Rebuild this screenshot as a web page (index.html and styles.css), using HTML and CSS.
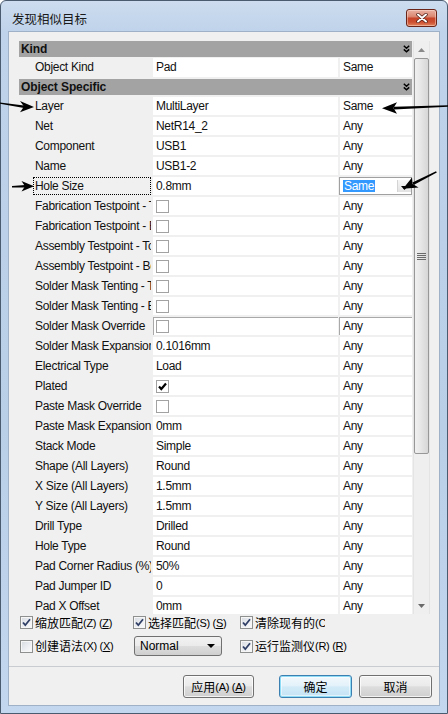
FILE: index.html
```html
<!DOCTYPE html>
<html>
<head>
<meta charset="utf-8">
<link rel="stylesheet" href="styles.css">
</head>
<body>
<div class="window">
  <div class="titlebar">
    <span class="title">发现相似目标</span>
    <div class="close">
      <svg width="12" height="10" viewBox="0 0 12 10"><path d="M2 1.5 L10 8.5 M10 1.5 L2 8.5" stroke="#4a1a12" stroke-width="3.4" stroke-linecap="round"/><path d="M2 1.5 L10 8.5 M10 1.5 L2 8.5" stroke="#fff" stroke-width="2" stroke-linecap="round"/></svg>
    </div>
  </div>
  <div class="client">
    <div class="main">
      <div class="grid">
        <div class="rows">
          <div class="hdr"><span>Kind</span><svg class="chev" width="7" height="8" viewBox="0 0 7 8"><path d="M0.8 0.8 L3.5 3.2 L6.2 0.8 M0.8 4.4 L3.5 6.8 L6.2 4.4" fill="none" stroke="#000" stroke-width="1.5"/></svg></div>
          <div class="row kindrow"><div class="lbl"><span class="t">Object Kind</span></div><div class="val">Pad</div><div class="cmp">Same</div></div>
          <div class="hdr hdr2"><span>Object Specific</span><svg class="chev" width="7" height="8" viewBox="0 0 7 8"><path d="M0.8 0.8 L3.5 3.2 L6.2 0.8 M0.8 4.4 L3.5 6.8 L6.2 4.4" fill="none" stroke="#000" stroke-width="1.5"/></svg></div>
          <div class="row"><div class="lbl"><span class="t">Layer</span></div><div class="val">MultiLayer</div><div class="cmp">Same</div></div>
          <div class="row"><div class="lbl"><span class="t">Net</span></div><div class="val">NetR14_2</div><div class="cmp">Any</div></div>
          <div class="row"><div class="lbl"><span class="t">Component</span></div><div class="val">USB1</div><div class="cmp">Any</div></div>
          <div class="row"><div class="lbl"><span class="t">Name</span></div><div class="val">USB1-2</div><div class="cmp">Any</div></div>
          <div class="row"><div class="lbl"><span class="t focus">Hole Size</span></div><div class="val">0.8mm</div><div class="cmp combo"><span class="sel">Same</span><span class="ddbtn"><svg width="7" height="4" viewBox="0 0 7 4"><path d="M0 0 H7 L3.5 4 Z" fill="#000"/></svg></span></div></div>
          <div class="row"><div class="lbl"><span class="t">Fabrication Testpoint - Top</span></div><div class="val"><span class="gcb"></span></div><div class="cmp">Any</div></div>
          <div class="row"><div class="lbl"><span class="t">Fabrication Testpoint - Bottom</span></div><div class="val"><span class="gcb"></span></div><div class="cmp">Any</div></div>
          <div class="row"><div class="lbl"><span class="t">Assembly Testpoint - Top</span></div><div class="val"><span class="gcb"></span></div><div class="cmp">Any</div></div>
          <div class="row"><div class="lbl"><span class="t">Assembly Testpoint - Bottom</span></div><div class="val"><span class="gcb"></span></div><div class="cmp">Any</div></div>
          <div class="row"><div class="lbl"><span class="t">Solder Mask Tenting - Top</span></div><div class="val"><span class="gcb"></span></div><div class="cmp">Any</div></div>
          <div class="row"><div class="lbl"><span class="t">Solder Mask Tenting - Bottom</span></div><div class="val"><span class="gcb"></span></div><div class="cmp">Any</div></div>
          <div class="row edit"><div class="lbl"><span class="t">Solder Mask Override</span></div><div class="val"><span class="gcb"></span></div><div class="cmp">Any</div></div>
          <div class="row"><div class="lbl"><span class="t">Solder Mask Expansion</span></div><div class="val">0.1016mm</div><div class="cmp">Any</div></div>
          <div class="row"><div class="lbl"><span class="t">Electrical Type</span></div><div class="val">Load</div><div class="cmp">Any</div></div>
          <div class="row"><div class="lbl"><span class="t">Plated</span></div><div class="val"><span class="gcb"><svg width="11" height="11" viewBox="0 0 11 11"><path d="M2 5.5 L4.3 8 L9 2.5" fill="none" stroke="#000" stroke-width="2.2"/></svg></span></div><div class="cmp">Any</div></div>
          <div class="row"><div class="lbl"><span class="t">Paste Mask Override</span></div><div class="val"><span class="gcb"></span></div><div class="cmp">Any</div></div>
          <div class="row"><div class="lbl"><span class="t">Paste Mask Expansion</span></div><div class="val">0mm</div><div class="cmp">Any</div></div>
          <div class="row"><div class="lbl"><span class="t">Stack Mode</span></div><div class="val">Simple</div><div class="cmp">Any</div></div>
          <div class="row"><div class="lbl"><span class="t">Shape (All Layers)</span></div><div class="val">Round</div><div class="cmp">Any</div></div>
          <div class="row"><div class="lbl"><span class="t">X Size (All Layers)</span></div><div class="val">1.5mm</div><div class="cmp">Any</div></div>
          <div class="row"><div class="lbl"><span class="t">Y Size (All Layers)</span></div><div class="val">1.5mm</div><div class="cmp">Any</div></div>
          <div class="row"><div class="lbl"><span class="t">Drill Type</span></div><div class="val">Drilled</div><div class="cmp">Any</div></div>
          <div class="row"><div class="lbl"><span class="t">Hole Type</span></div><div class="val">Round</div><div class="cmp">Any</div></div>
          <div class="row"><div class="lbl"><span class="t">Pad Corner Radius (%)</span></div><div class="val">50%</div><div class="cmp">Any</div></div>
          <div class="row"><div class="lbl"><span class="t">Pad Jumper ID</span></div><div class="val">0</div><div class="cmp">Any</div></div>
          <div class="row"><div class="lbl"><span class="t">Pad X Offset</span></div><div class="val">0mm</div><div class="cmp">Any</div></div>
        </div>
        <div class="scroll">
          <div class="sbtn"><svg width="7" height="4" viewBox="0 0 7 4"><path d="M0 4 H7 L3.5 0 Z" fill="#8a8a8a"/></svg></div>
          <div class="thumb"><svg width="9" height="9" viewBox="0 0 9 9"><path d="M0 1.5 H9 M0 3.5 H9 M0 5.5 H9 M0 7.5 H9" stroke="#6a6a6a" stroke-width="1"/></svg></div>
          <div class="track"></div>
          <div class="sbtn"><svg width="7" height="4" viewBox="0 0 7 4"><path d="M0 0 H7 L3.5 4 Z" fill="#6a6a6a"/></svg></div>
        </div>
      </div>
      <div class="opts">
        <div class="opt"><span class="cb on"><svg width="11" height="11" viewBox="0 0 11 11"><path d="M2 5.5 L4.3 8.2 L9 2.3" fill="none" stroke="#2f3f66" stroke-width="1.8"/></svg></span><span class="cn">缩放匹配</span><span class="la">(Z) (<u>Z</u>)</span></div>
        <div class="opt"><span class="cb on"><svg width="11" height="11" viewBox="0 0 11 11"><path d="M2 5.5 L4.3 8.2 L9 2.3" fill="none" stroke="#2f3f66" stroke-width="1.8"/></svg></span><span class="cn">选择匹配</span><span class="la">(S) (<u>S</u>)</span></div>
        <div class="opt"><span class="cb on"><svg width="11" height="11" viewBox="0 0 11 11"><path d="M2 5.5 L4.3 8.2 L9 2.3" fill="none" stroke="#2f3f66" stroke-width="1.8"/></svg></span><span class="clip"><span class="cn">清除现有的</span><span class="la">(C) (<u>C</u>)</span></span></div>
        <div class="opt row2"><span class="cb"></span><span class="cn">创建语法</span><span class="la">(X) (<u>X</u>)</span></div>
        <div class="opt row2"><div class="select"><span>Normal</span><svg width="8" height="4" viewBox="0 0 8 4"><path d="M0 0 H8 L4 4 Z" fill="#000"/></svg></div></div>
        <div class="opt row2"><span class="cb on"><svg width="11" height="11" viewBox="0 0 11 11"><path d="M2 5.5 L4.3 8.2 L9 2.3" fill="none" stroke="#2f3f66" stroke-width="1.8"/></svg></span><span class="cn">运行监测仪</span><span class="la">(R) (<u>R</u>)</span></div>
      </div>
    </div>
    <div class="buttons">
      <div class="btn apply"><span class="cn">应用</span><span class="la">(A) (<u>A</u>)</span></div>
      <div class="btn default"><span class="cn">确定</span></div>
      <div class="btn"><span class="cn">取消</span></div>
    </div>
  </div>
  <svg class="annot" width="448" height="714" viewBox="0 0 448 714">
    <g fill="#000">
      <polygon points="0,102.4 24,105.4 24,108 0,103.8"/>
      <polygon points="34,107 20,101 24,106.6 20,112.2"/>
      <polygon points="448,105.2 394,106.8 394,109.4 448,106.8"/>
      <polygon points="382,108.2 397,102.2 393.5,108 397,113.8"/>
      <polygon points="12,186 25,185 25,187.6 12,187.4"/>
      <polygon points="34,186.2 21.5,181 25,186.3 21.5,191.4"/>
      <polygon points="436,171.2 412.4,182.6 413.6,185 436.8,172.6"/>
      <polygon points="403,188.8 412,177.4 412.6,184 418.6,187.4"/>
    </g>
  </svg>
</div>
</body>
</html>
```
FILE: styles.css
```css
html, body {
  margin: 0;
  padding: 0;
}
body {
  width: 448px;
  height: 714px;
  overflow: hidden;
  font-family: "Liberation Sans", "Noto Sans CJK SC", sans-serif;
  font-size: 12px;
  color: #000;
  background: #fff;
}
.window {
  position: relative;
  width: 448px;
  height: 714px;
  box-sizing: border-box;
  border: 1px solid #4a5b70;
  border-radius: 6px 6px 0 0;
  background: linear-gradient(180deg, #cddcef 0, #bfd3ea 30px, #b9cfe8 60%, #c3d7ee 100%);
  display: flex;
  flex-direction: column;
}
.titlebar {
  height: 30px;
  display: flex;
  justify-content: space-between;
  align-items: flex-start;
  padding: 0 10px 0 11px;
  flex-shrink: 0;
}
.title {
  font-family: "Noto Sans CJK SC", sans-serif;
  font-size: 12.5px;
  line-height: 14px;
  margin-top: 11px;
  color: #1a1a1a;
}
.close {
  margin-top: 8px;
  width: 31px;
  height: 18px;
  box-sizing: border-box;
  border: 1px solid #6a2518;
  border-radius: 3px;
  background: linear-gradient(180deg, #eab0a2 0, #dc8a74 40%, #c7452a 52%, #cc4e30 75%, #e2845c 100%);
  box-shadow: inset 0 0 0 1px rgba(255, 230, 220, 0.45);
  display: flex;
  align-items: center;
  justify-content: center;
}
.client {
  margin: 0 7px;
  height: 675px;
  flex-shrink: 0;
  box-sizing: border-box;
  border: 1px solid #9fb1c6;
  background: #f0f0f0;
  display: flex;
  flex-direction: column;
}
.main {
  height: 634px;
  box-sizing: border-box;
  padding: 9px 0 0 10px;
}
.grid {
  display: flex;
  gap: 1px;
  width: 411px;
  height: 573px;
  overflow: hidden;
}
.rows {
  width: 393px;
  flex-shrink: 0;
  letter-spacing: -0.3px;
  color: #111;
}
.hdr {
  height: 16px;
  margin-bottom: 1px;
  background: #a3a3a3;
  display: flex;
  align-items: center;
  justify-content: space-between;
  padding: 0 2px 0 2px;
  font-weight: bold;
  line-height: 16px;
  letter-spacing: -0.1px;
}
.hdr2 {
  margin-bottom: 2px;
}
.row {
  display: flex;
  height: 18px;
  margin-bottom: 2px;
  line-height: 18px;
}
.kindrow {
  height: 19px;
  line-height: 19px;
}
.lbl {
  width: 132px;
  margin-right: 2px;
  padding-left: 14px;
  box-sizing: border-box;
  overflow: hidden;
}
.t {
  display: block;
  height: 100%;
  box-sizing: border-box;
  border: 1px solid transparent;
  padding-left: 1px;
  line-height: 16px;
  white-space: nowrap;
}
.kindrow .t {
  line-height: 17px;
}
.t.focus {
  border: 1px dotted #000;
}
.val {
  width: 185px;
  background: #fff;
  padding-left: 3px;
  box-sizing: border-box;
  white-space: nowrap;
  overflow: hidden;
  display: flex;
  align-items: center;
}
.cmp {
  width: 72px;
  margin-left: 2px;
  background: #fff;
  padding-left: 3px;
  box-sizing: border-box;
  white-space: nowrap;
  display: flex;
  align-items: center;
}
.edit .val {
  box-shadow: inset 1px 1px 0 #a9a9a9;
}
.edit .cmp {
  width: 73px;
  margin-left: 1px;
  padding-left: 4px;
  box-shadow: inset 1px 1px 0 #a9a9a9;
}
.combo {
  width: 73px;
  margin-left: 1px;
  border: 1px solid #a0a0a0;
  padding-left: 3px;
  padding-right: 0;
}
.sel {
  background: #3399ff;
  color: #fff;
  line-height: 12px;
  padding: 0 1px;
}
.ddbtn {
  margin-left: auto;
  width: 14px;
  height: 12px;
  box-sizing: border-box;
  border-left: 1px solid #d4d4d4;
  background: linear-gradient(180deg, #f6f6f6, #e2e2e2);
  display: flex;
  align-items: flex-end;
  justify-content: center;
  padding-bottom: 2px;
  align-self: center;
}
.gcb {
  width: 13px;
  height: 13px;
  box-sizing: border-box;
  border: 1px solid #a2a2a2;
  background: #fff;
  display: flex;
  align-items: center;
  justify-content: center;
}
.scroll {
  width: 17px;
  display: flex;
  flex-direction: column;
  background: #efefef;
  box-shadow: inset 1px 0 0 #e4e4e4, inset -1px 0 0 #e4e4e4;
}
.sbtn {
  height: 17px;
  display: flex;
  align-items: center;
  justify-content: center;
  flex-shrink: 0;
}
.thumb {
  height: 396px;
  margin: 0 1px 0 1px;
  box-sizing: border-box;
  border: 1px solid #979797;
  border-radius: 2px;
  background: linear-gradient(90deg, #f0f0f0 0, #e6e6e6 45%, #d6d6d6 100%);
  display: flex;
  align-items: center;
  justify-content: center;
  flex-shrink: 0;
}
.track {
  flex: 1;
}
.opts {
  display: grid;
  grid-template-columns: 113px 107px 150px;
  grid-template-rows: 17px 22px;
  row-gap: 4px;
  padding-left: 1px;
}
.opt {
  display: flex;
  align-items: center;
  white-space: nowrap;
}
.cb {
  width: 13px;
  height: 13px;
  box-sizing: border-box;
  border: 1px solid #8e8f8f;
  background: linear-gradient(135deg, #d6dae0 0, #eef0f3 60%, #fbfbfb 100%);
  box-shadow: inset 0 0 0 1px #f6f6f6;
  display: flex;
  align-items: center;
  justify-content: center;
  margin-right: 2px;
  flex-shrink: 0;
}
.cn {
  font-family: "Noto Sans CJK SC", sans-serif;
  font-size: 12px;
  line-height: 14px;
}
.la {
  font-family: "Liberation Sans", sans-serif;
  font-size: 11px;
  margin-left: 0;
  letter-spacing: -0.3px;
}
.clip {
  width: 70px;
  overflow: hidden;
  white-space: nowrap;
  display: flex;
  align-items: center;
}
.select {
  width: 88px;
  height: 20px;
  margin-left: 1px;
  box-sizing: border-box;
  border: 1px solid #707070;
  border-radius: 3px;
  background: linear-gradient(180deg, #f2f2f2 0, #ebebeb 48%, #dddddd 52%, #cfcfcf 100%);
  display: flex;
  align-items: center;
  justify-content: space-between;
  padding: 0 6px 0 5px;
  font-size: 12px;
}
.buttons {
  flex: 1;
  border-top: 1px solid #c9cdd2;
  display: flex;
  justify-content: flex-end;
  align-items: flex-start;
  padding: 8px 7px 0 0;
}
.btn {
  width: 73px;
  height: 23px;
  box-sizing: border-box;
  border: 1px solid #707070;
  border-radius: 3px;
  background: linear-gradient(180deg, #f2f2f2 0, #ebebeb 45%, #dddddd 52%, #cfcfcf 100%);
  box-shadow: inset 0 0 0 1px rgba(255, 255, 255, 0.75);
  display: flex;
  align-items: center;
  justify-content: center;
  margin-left: 7px;
}
.btn.apply {
  width: 71px;
  margin-right: 18px;
}
.btn.default {
  border-color: #3c7fb1;
  box-shadow: inset 0 0 0 1px #8fdcf6, inset 0 0 0 2px rgba(255, 255, 255, 0.5);
  background: linear-gradient(180deg, #f1f8fc 0, #e4f2fa 45%, #d3ebf8 52%, #c4e3f5 100%);
}
.annot {
  position: absolute;
  left: -1px;
  top: -1px;
  pointer-events: none;
}
```
